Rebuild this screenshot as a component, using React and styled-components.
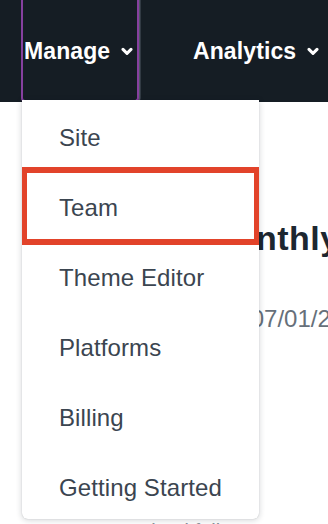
import React from "react";
import styled, { createGlobalStyle } from "styled-components";

const GlobalStyle = createGlobalStyle`
  html, body {
    margin: 0;
    padding: 0;
    background: #ffffff;
    font-family: "Liberation Sans", Arial, sans-serif;
  }
`;

const Page = styled.div`
  position: relative;
  width: 328px;
  height: 524px;
  overflow: hidden;
  background: #ffffff;
`;

const NavBar = styled.nav`
  display: flex;
  align-items: stretch;
  height: 102px;
  padding-left: 21px;
  background: #151d24;
`;

const NavItem = styled.div`
  position: relative;
  display: flex;
  align-items: center;
  gap: 11px;
  box-sizing: border-box;
  width: ${(p) => p.$width}px;
  margin-right: ${(p) => p.$gap || 0}px;
  padding-left: ${(p) => (p.$active ? 1 : 3)}px;
  padding-top: 3px;
  color: #ffffff;
  font-size: 23px;
  font-weight: 700;
  letter-spacing: 0.1px;
  border: 2px solid ${(p) => (p.$active ? "#86409f" : "transparent")};
  border-top: none;
  border-radius: 0 0 4px 4px;
  box-shadow: ${(p) => (p.$active ? "1.5px 0 0 #4e5862" : "none")};
`;

const Chevron = () => (
  <svg width="12" height="9" viewBox="0 0 12 9">
    <path
      d="M2 2.4 L6 6.4 L10 2.4"
      fill="none"
      stroke="#ffffff"
      strokeWidth="3"
      strokeLinecap="round"
      strokeLinejoin="round"
    />
  </svg>
);

const Dropdown = styled.ul`
  position: absolute;
  top: 100%;
  left: -1px;
  z-index: 2;
  width: 237px;
  height: 416px;
  margin: 0;
  padding: 3px 0 0;
  list-style: none;
  overflow: hidden;
  background: #ffffff;
  border-radius: 0 0 6px 6px;
  box-shadow: 0 1px 6px rgba(20, 30, 40, 0.2), 0 0 1px rgba(20, 30, 40, 0.25);
`;

const MenuItem = styled.li`
  position: relative;
  height: 70px;
  padding-left: 37px;
  line-height: 70px;
  color: #3b4550;
  font-size: 24px;
  font-weight: 400;
  white-space: nowrap;
`;

const Highlight = styled.span`
  position: absolute;
  top: -6px;
  left: -1px;
  right: -1px;
  height: 78px;
  box-sizing: border-box;
  border: 6px solid #e2432a;
  border-radius: 1px;
`;

const Main = styled.main`
  display: flex;
  flex-direction: column;
  padding: 116px 0 0 100px;
  white-space: nowrap;
`;

const Heading = styled.h1`
  margin: 0 0 0 19px;
  height: 40px;
  line-height: 40px;
  color: #1d2730;
  font-size: 34px;
  font-weight: 700;
  letter-spacing: 0.5px;
`;

const DateLine = styled.p`
  margin: 47px 0 0;
  line-height: 28px;
  color: #66707a;
  font-size: 24px;
`;

const Note = styled.p`
  margin: 187px 0 0;
  line-height: 22px;
  color: #8a939c;
  font-size: 20px;
`;

const items = ["Site", "Team", "Theme Editor", "Platforms", "Billing", "Getting Started"];

export default function App() {
  return (
    <Page>
      <GlobalStyle />
      <NavBar>
        <NavItem $active $width={118} $gap={49}>
          Manage
          <Chevron />
          <Dropdown>
            {items.map((item) => (
              <MenuItem key={item}>
                {item}
                {item === "Team" && <Highlight />}
              </MenuItem>
            ))}
          </Dropdown>
        </NavItem>
        <NavItem $width={140}>
          Analytics
          <Chevron />
        </NavItem>
      </NavBar>
      <Main>
        <Heading>Your Monthly Report</Heading>
        <DateLine>Billing period: 07/01/2023 – 07/31/2023</DateLine>
        <Note>Download full summary</Note>
      </Main>
    </Page>
  );
}
